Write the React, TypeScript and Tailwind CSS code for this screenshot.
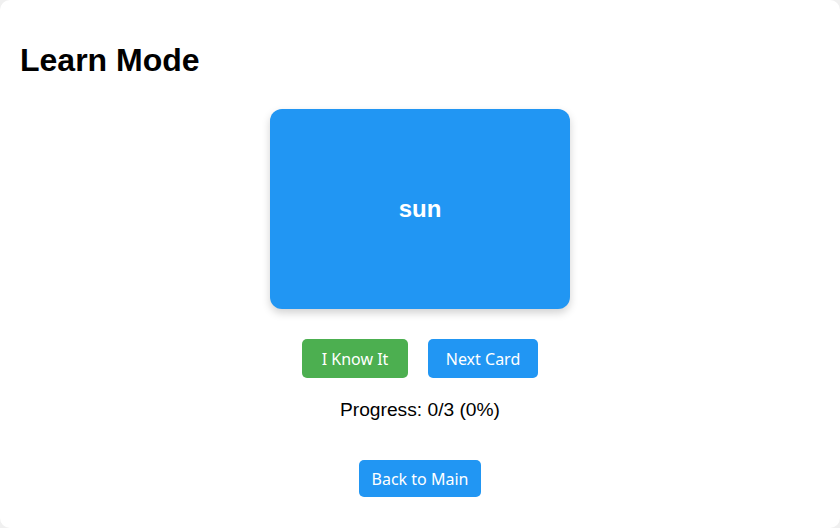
export default function App() {
  return (
    <div className="h-[528px] w-full bg-[#f0f0f0] font-['Liberation_Sans',Arial,sans-serif]">
      <div className="flex h-full flex-col items-center rounded-[10px] bg-white px-5 pt-5">
        <h1 className="mt-[22px] self-start text-[32px] leading-[37px] font-bold text-black">Learn Mode</h1>

        <div className="mt-[30px] flex h-[200px] w-[300px] items-center justify-center rounded-[12px] bg-[#2196F3] shadow-[0_4px_8px_rgba(0,0,0,0.18)]">
          <span className="text-[24px] font-bold text-white">sun</span>
        </div>

        <div className="mt-[30px] flex gap-5 font-['Noto_Sans',sans-serif] text-[16px] text-white">
          <button className="flex h-[39px] w-[106px] items-center justify-center rounded-[5px] bg-[#4CAF50]">I Know It</button>
          <button className="flex h-[39px] w-[110px] items-center justify-center rounded-[5px] bg-[#2196F3]">Next Card</button>
        </div>

        <p className="mt-[21px] text-[19.2px] leading-[22px] text-black">Progress: 0/3 (0%)</p>

        <button className="mt-[39px] flex h-[37px] w-[122px] items-center justify-center rounded-[5px] bg-[#2196F3] font-['Noto_Sans',sans-serif] text-[16px] text-white">
          Back to Main
        </button>
      </div>
    </div>
  )
}
